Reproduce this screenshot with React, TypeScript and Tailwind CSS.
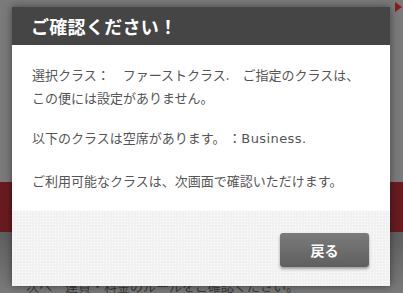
export default function App() {
  return (
    <div
      className="relative w-[403px] h-[293px] overflow-hidden bg-[#7a7a7a]"
      style={{ fontFamily: '"Noto Sans CJK JP", "Noto Sans", sans-serif' }}
    >
      {/* page behind the overlay */}
      <div className="flex flex-col h-full">
        <div className="h-[182px] relative">
          <div className="absolute right-[1px] top-[2px] w-0 h-0 border-y-[5px] border-y-transparent border-l-[7px] border-l-[#8a1c1c]" />
        </div>
        <div className="h-[50px] bg-[#681b1f]" />
        <div className="flex-1 bg-gradient-to-b from-[#5e5e5e] to-[#7a7a7a]" />
        <div className="absolute left-[26px] top-[276px] text-[13px] text-[#3a3a3a] whitespace-nowrap">
          次へ　運賃・料金のルールをご確認ください。
        </div>
      </div>

      {/* modal */}
      <div className="absolute left-[12px] top-[7px] w-[378px] h-[279px] flex flex-col bg-white shadow-[0_0_8px_rgba(0,0,0,0.45)]">
        <div className="h-[38px] bg-[#454545] flex items-center pl-[19px]">
          <h1 className="text-white font-bold text-[18px] leading-none tracking-[0.3px]">
            ご確認ください！
          </h1>
        </div>
        <div className="flex-1 pt-[18px] pl-[20px] pr-[6px] text-[13px] leading-[23px] text-[#555] whitespace-nowrap">
          <p className="mb-[17px]">
            選択クラス：　ファーストクラス.　ご指定のクラスは、
            <br />
            この便には設定がありません。
          </p>
          <p className="mb-[19px]">
            以下のクラスは空席があります。 ：
            <span className="tracking-[0.4px]" style={{ fontFamily: '"DejaVu Sans", sans-serif' }}>
              Business.
            </span>
          </p>
          <p>ご利用可能なクラスは、次画面で確認いただけます。</p>
        </div>
        <div className="h-[75px] flex items-center justify-end pr-[21px] bg-[#f1f1f1] bg-[radial-gradient(#ffffff_0.8px,transparent_0.9px)] bg-[length:3px_3px]">
          <button className="w-[89px] h-[34px] rounded-[3px] bg-gradient-to-b from-[#7b7b7b] to-[#5f5f5f] text-white font-bold text-[14px] shadow-[0_2px_3px_rgba(0,0,0,0.35)] mt-[3px]">
            戻る
          </button>
        </div>
      </div>
    </div>
  );
}
